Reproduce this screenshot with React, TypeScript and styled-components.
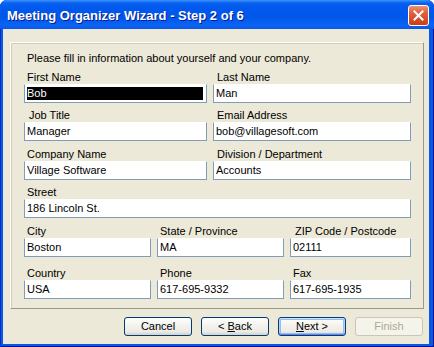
import React from 'react';
import styled, {createGlobalStyle} from 'styled-components';

type FieldDef = {
    label: string;
    value: string;
    gap?: number;
    indent?: number;
    selected?: boolean;
};

type RowDef = {
    cols: string;
    space: number;
    fields: FieldDef[];
};

const ROWS: RowDef[] = [
    {
        cols: '183px 198px',
        space: 6,
        fields: [
            {label: 'First Name', value: 'Bob', gap: 128, selected: true},
            {label: 'Last Name', value: 'Man', gap: 115, indent: 4},
        ],
    },
    {
        cols: '183px 198px',
        space: 6,
        fields: [
            {label: 'Job Title', value: 'Manager', gap: 64, indent: 5},
            {label: 'Email Address', value: 'bob@villagesoft.com', indent: 4},
        ],
    },
    {
        cols: '183px 198px',
        space: 7,
        fields: [
            {label: 'Company Name', value: 'Village Software'},
            {label: 'Division / Department', value: 'Accounts', gap: 140, indent: 4},
        ],
    },
    {
        cols: '387px',
        space: 6,
        fields: [
            {label: 'Street', value: '186 Lincoln St.', gap: 83},
        ],
    },
    {
        cols: '127px 127px 121px',
        space: 7,
        fields: [
            {label: 'City', value: 'Boston', gap: 50},
            {label: 'State / Province', value: 'MA'},
            {label: 'ZIP Code / Postcode', value: '02111', indent: 5},
        ],
    },
    {
        cols: '127px 127px 121px',
        space: 10,
        fields: [
            {label: 'Country', value: 'USA', gap: 89},
            {label: 'Phone', value: '617-695-9332'},
            {label: 'Fax', value: '617-695-1935', gap: 27},
        ],
    },
];

const CloseIcon = () => (
    <svg width='19' height='19' viewBox='0 0 19 19'>
        <path d='M5.5 5.5 L13.5 13.5 M13.5 5.5 L5.5 13.5' stroke='#fff' strokeWidth='2' strokeLinecap='square'/>
    </svg>
);

export default function App() {
    return (
        <>
            <GlobalStyle/>
            <Window>
                <TitleBar>
                    <Title>{'Meeting Organizer Wizard - Step 2 of 6'}</Title>
                    <CloseButton aria-label='Close'>
                        <CloseIcon/>
                    </CloseButton>
                </TitleBar>
                <Client>
                    <Panel>
                        <Intro>{'Please fill in information about yourself and your company.'}</Intro>
                        {ROWS.map((row, i) => (
                            <Row
                                key={i}
                                $cols={row.cols}
                                $space={row.space}
                            >
                                {row.fields.map((f) => (
                                    <Field key={f.label}>
                                        <Label $indent={f.indent ?? 3}>{f.label}</Label>
                                        <TextBox $gap={f.gap ?? 0}>
                                            <Value $selected={Boolean(f.selected)}>{f.value}</Value>
                                        </TextBox>
                                    </Field>
                                ))}
                            </Row>
                        ))}
                    </Panel>
                    <ButtonRow>
                        <Button>{'Cancel'}</Button>
                        <Button>{'< '}<u>{'B'}</u>{'ack'}</Button>
                        <Button $default={true}><u>{'N'}</u>{'ext >'}</Button>
                        <Button disabled={true}>{'Finish'}</Button>
                    </ButtonRow>
                </Client>
            </Window>
        </>
    );
}

const GlobalStyle = createGlobalStyle`
    html, body {
        margin: 0;
        padding: 0;
        background: #ffffff;
    }
    body {
        font-family: "Liberation Sans", Arial, sans-serif;
        font-size: 11px;
        color: #000000;
    }
`;

const Window = styled.div`
    width: 434px;
    height: 347px;
    display: flex;
    flex-direction: column;
    background: #0a56e8;
    border-radius: 7px 7px 0 0;
    overflow: hidden;
    box-shadow: inset 1px 0 0 #0032c8, inset -1px 0 0 #00138c, inset 0 -1px 0 #00138c;
`;

const TitleBar = styled.div`
    height: 29px;
    flex: none;
    display: flex;
    align-items: flex-start;
    justify-content: space-between;
    padding: 0 5px 0 7px;
    background: linear-gradient(to bottom,
        #3d95ff 0%,
        #0a61f0 10%,
        #0058ee 30%,
        #0057e8 60%,
        #0a63f5 85%,
        #0b5fee 92%,
        #0a56e8 100%);
`;

const Title = styled.div`
    padding-top: 8px;
    font-family: "Liberation Sans", Arial, sans-serif;
    font-weight: bold;
    font-size: 13px;
    line-height: 15px;
    color: #ffffff;
    text-shadow: 1px 1px 0 #0a1a8c;
    white-space: nowrap;
`;

const CloseButton = styled.div`
    margin-top: 5px;
    width: 21px;
    height: 21px;
    box-sizing: border-box;
    border: 1px solid #ffffff;
    border-radius: 3px;
    background: linear-gradient(to bottom, #ec9373 0%, #e2603b 35%, #d84d26 70%, #c8401a 100%);
    display: flex;
    align-items: center;
    justify-content: center;
`;

const Client = styled.div`
    flex: 1;
    margin: 0 5px 3px 3px;
    background: #ece9d8;
    padding: 13px 5px 8px 7px;
    display: flex;
    flex-direction: column;
    gap: 8px;
`;

const Panel = styled.div`
    flex: 1;
    box-sizing: border-box;
    border: 1px solid;
    border-color: #ffffff #9d9a8c #9d9a8c #ffffff;
    box-shadow: inset 1px 1px 0 #d0cdbf;
    padding: 9px 12px 0 13px;
`;

const Intro = styled.div`
    line-height: 13px;
    height: 13px;
    padding-left: 3px;
    white-space: nowrap;
`;

const Row = styled.div<{$cols: string; $space: number}>`
    display: grid;
    grid-template-columns: ${(p) => p.$cols};
    column-gap: 6px;
    margin-top: ${(p) => p.$space}px;
`;

const Field = styled.div`
    display: flex;
    flex-direction: column;
`;

const Label = styled.div<{$indent: number}>`
    height: 13px;
    line-height: 13px;
    padding-left: ${(p) => p.$indent}px;
    white-space: nowrap;
`;

const TextBox = styled.div<{$gap: number}>`
    height: 19px;
    box-sizing: border-box;
    border: 1px solid #7f9db9;
    border-top-color: #ffffff;
    background:
        linear-gradient(#7f9db9, #7f9db9) no-repeat ${(p) => p.$gap}px 0 / calc(100% - ${(p) => p.$gap}px) 1px border-box,
        #ffffff;
    padding: 2px 3px 2px 2px;
`;

const Value = styled.div<{$selected: boolean}>`
    height: 13px;
    line-height: 13px;
    white-space: nowrap;
    overflow: hidden;
    background: ${(p) => (p.$selected ? '#000000' : 'transparent')};
    color: ${(p) => (p.$selected ? '#ffffff' : '#000000')};
`;

const ButtonRow = styled.div`
    display: flex;
    justify-content: flex-end;
    gap: 9px;
    padding-right: 1px;
`;

const Button = styled.button<{$default?: boolean}>`
    width: 68px;
    height: 19px;
    box-sizing: border-box;
    padding: 0;
    font-family: "Liberation Sans", Arial, sans-serif;
    font-size: 11px;
    line-height: 15px;
    color: #000000;
    border: 1px solid #003c74;
    border-radius: 3px;
    background: linear-gradient(to bottom, #ffffff 0%, #f4f3ee 40%, #ecebe6 80%, #d6d0c5 100%);
    box-shadow: ${(p) => (p.$default ?
        'inset 0 1px 0 #cee7ff, inset 0 -1px 0 #6982ee, inset 1px 0 0 #b8d0f9, inset -1px 0 0 #b8d0f9, inset 0 0 0 2px #9ab9f1' :
        'none')};

    &:disabled {
        color: #aca899;
        border-color: #c9c7ba;
        background: #f5f4ea;
    }
`;
